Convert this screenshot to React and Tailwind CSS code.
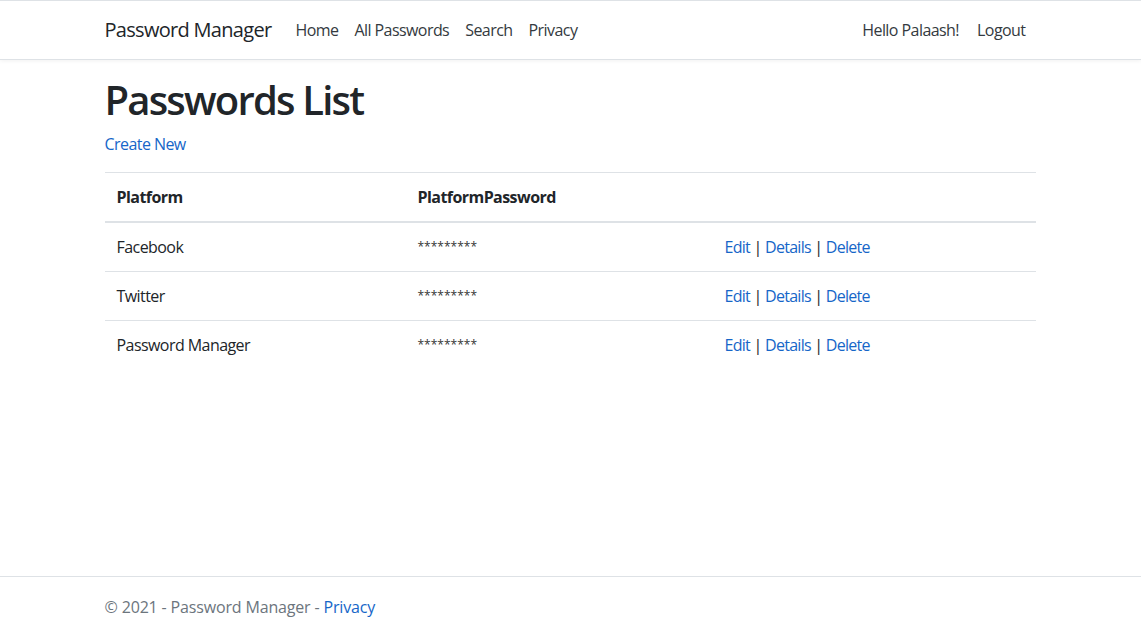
export default function App() {
  const rows = ["Facebook", "Twitter", "Password Manager"];
  const font = { fontFamily: '"Segoe UI", "Open Sans", "Noto Sans", sans-serif' };
  return (
    <div className="relative min-h-[637px] bg-white text-[#212529] text-[16px] leading-[1.5] tracking-[-0.035em]" style={font}>
      <header className="border-t border-b border-[#dee2e6] bg-white shadow-[0_1px_4px_rgba(0,0,0,0.06)] h-[60px]">
        <nav className="w-[960px] mx-auto pl-[14px] pr-[15px] h-full flex items-center">
          <span className="text-[20px] mr-4 text-[#212529] tracking-[-0.035em]">Password Manager</span>
          <div className="flex">
            {["Home", "All Passwords", "Search", "Privacy"].map((t) => (
              <span key={t} className="px-2 py-2 text-[#343a40]">{t}</span>
            ))}
          </div>
          <div className="ml-auto flex mr-[2px]">
            <span className="pl-2 pr-[10px] py-2 text-[#343a40]">Hello Palaash!</span>
            <span className="px-2 py-2 text-[#343a40]">Logout</span>
          </div>
        </nav>
      </header>
      <main className="w-[960px] mx-auto pl-[14px] pr-[15px] pt-4">
        <h1 className="text-[40px] font-semibold leading-[1.2] mb-2 tracking-[-0.045em]">Passwords List</h1>
        <p className="mb-4"><span className="text-[#1666c8]">Create New</span></p>
        <table className="w-full border-collapse">
          <thead>
            <tr className="border-t border-[#dee2e6]">
              <th className="w-[301px] text-left font-bold px-3 py-3 border-b-2 border-[#dee2e6]">Platform</th>
              <th className="w-[307px] text-left font-bold px-3 py-3 border-b-2 border-[#dee2e6]">PlatformPassword</th>
              <th className="px-3 py-3 border-b-2 border-[#dee2e6]"></th>
            </tr>
          </thead>
          <tbody>
            {rows.map((r, i) => (
              <tr key={r} className={i > 0 ? "border-t border-[#dee2e6]" : ""}>
                <td className="px-3 py-3">{r}</td>
                <td className="px-3 py-3"><span className="text-[12px] tracking-normal align-[2px] text-[#333]">*********</span></td>
                <td className="px-3 py-3 tracking-[-0.045em]">
                  <span className="text-[#1666c8]">Edit</span> | <span className="text-[#1666c8]">Details</span> | <span className="text-[#1666c8]">Delete</span>
                </td>
              </tr>
            ))}
          </tbody>
        </table>
      </main>
      <footer className="absolute bottom-0 left-0 right-0 border-t border-[#dee2e6] leading-[60px] text-[#6c757d] tracking-[-0.01em]">
        <div className="w-[960px] mx-auto pl-[14px] pr-[15px]">
          © 2021 - Password Manager - <span className="text-[#1666c8]">Privacy</span>
        </div>
      </footer>
    </div>
  );
}
